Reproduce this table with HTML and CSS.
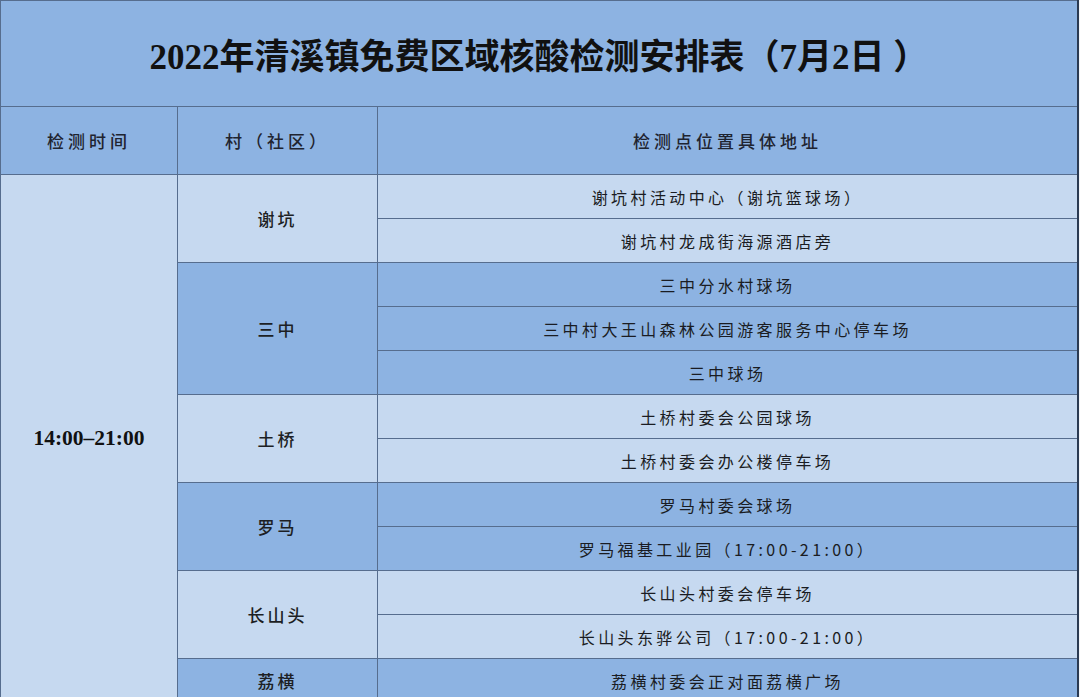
FILE: index.html
```html
<!DOCTYPE html>
<html lang="zh-CN">
<head>
<meta charset="utf-8">
<title>2022年清溪镇免费区域核酸检测安排表</title>
<link rel="stylesheet" href="styles.css">
</head>
<body>
<table class="sheet">
  <colgroup>
    <col class="c-time">
    <col class="c-village">
    <col class="c-addr">
  </colgroup>
  <thead>
    <tr class="title-row">
      <th colspan="3" class="title">2022年清溪镇免费区域核酸检测安排表（7月2日 ）</th>
    </tr>
    <tr class="head-row">
      <th>检测时间</th>
      <th>村（社区）</th>
      <th>检测点位置具体地址</th>
    </tr>
  </thead>
  <tbody>
    <tr>
      <td rowspan="12" class="time light">14:00–21:00</td>
      <td rowspan="2" class="village light">谢坑</td>
      <td class="addr light">谢坑村活动中心（谢坑篮球场）</td>
    </tr>
    <tr><td class="addr light">谢坑村龙成街海源酒店旁</td></tr>
    <tr>
      <td rowspan="3" class="village dark">三中</td>
      <td class="addr dark">三中分水村球场</td>
    </tr>
    <tr><td class="addr dark">三中村大王山森林公园游客服务中心停车场</td></tr>
    <tr><td class="addr dark">三中球场</td></tr>
    <tr>
      <td rowspan="2" class="village light">土桥</td>
      <td class="addr light">土桥村委会公园球场</td>
    </tr>
    <tr><td class="addr light">土桥村委会办公楼停车场</td></tr>
    <tr>
      <td rowspan="2" class="village dark">罗马</td>
      <td class="addr dark">罗马村委会球场</td>
    </tr>
    <tr><td class="addr dark">罗马福基工业园（17:00-21:00）</td></tr>
    <tr>
      <td rowspan="2" class="village light">长山头</td>
      <td class="addr light">长山头村委会停车场</td>
    </tr>
    <tr><td class="addr light">长山头东骅公司（17:00-21:00）</td></tr>
    <tr>
      <td class="village dark">荔横</td>
      <td class="addr dark">荔横村委会正对面荔横广场</td>
    </tr>
  </tbody>
</table>
</body>
</html>
```
FILE: styles.css
```css
html, body {
  margin: 0;
  padding: 0;
  background: #f4f6f9;
  overflow: hidden;
}

.sheet {
  border-collapse: collapse;
  table-layout: fixed;
  width: 1079px;
  font-family: "Noto Sans CJK SC", "Noto Sans", sans-serif;
  color: #1d1f24;
  border-left: 1px solid #6f87a8;
  border-top: 1px solid #6f87a8;
  border-right: 2px solid #2a3a52;
}

.c-time { width: 177px; }
.c-village { width: 200px; }

.sheet th, .sheet td {
  border: 1px solid #566d8e;
  padding: 0;
  text-align: center;
  vertical-align: middle;
}

.title-row th {
  height: 105px;
  background: #8db3e2;
  font-family: "Liberation Serif", "Noto Sans CJK SC", serif;
  font-weight: 700;
  font-size: 35px;
  color: #111;
  letter-spacing: 0;
}

.head-row th {
  height: 67px;
  background: #8db3e2;
  font-size: 17px;
  font-weight: 500;
  letter-spacing: 4px;
  color: #1f2430;
}

.sheet tbody td {
  height: 43px;
}

.light { background: #c6d9f0; }
.dark { background: #8db3e2; }

.time {
  font-family: "Liberation Serif", serif;
  font-weight: 700;
  font-size: 21.5px;
  color: #111;
}

.village {
  font-size: 17px;
  font-weight: 500;
  letter-spacing: 3px;
}

.addr {
  font-size: 16px;
  letter-spacing: 3.4px;
  color: #1a1c22;
}
```
